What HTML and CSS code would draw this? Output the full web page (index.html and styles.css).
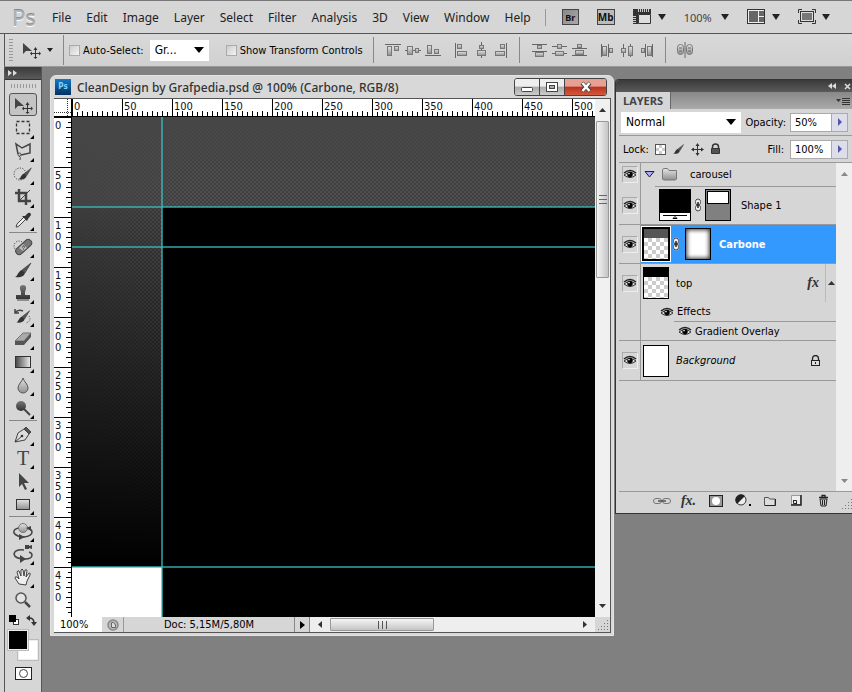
FILE: index.html
```html
<!DOCTYPE html>
<html lang="en">
<head>
    <meta charset="UTF-8">
    <meta name="viewport" content="width=device-width, initial-scale=1.0">
    <title>CleanDesign by Grafpedia.psd</title>
    <link rel="stylesheet" href="styles.css">
</head>
<body>
    <!-- shared gradients and symbols -->
    <svg class="defs" width="0" height="0" aria-hidden="true">
        <defs>
            <linearGradient id="metal" x1="0" y1="0" x2="0" y2="1"><stop offset="0" stop-color="#e4e4e4"/><stop offset="1" stop-color="#909090"/></linearGradient>
            <linearGradient id="dark" x1="0" y1="0" x2="0" y2="1"><stop offset="0" stop-color="#777"/><stop offset="1" stop-color="#333"/></linearGradient>
            <linearGradient id="fade" x1="0" y1="0" x2="1" y2="0"><stop offset="0" stop-color="#444"/><stop offset="1" stop-color="#eee"/></linearGradient>
            <symbol id="eye" viewBox="0 0 14 10">
                <path d="M1 4Q7-1 13 4" fill="none" stroke="#222" stroke-width="1.6"/>
                <path d="M1 6Q7 1 13 6Q7 11 1 6z" fill="#ddd" stroke="#333"/>
                <circle cx="7" cy="5.5" r="2.7" fill="#000"/><circle cx="6" cy="4.6" r=".8" fill="#fff"/>
            </symbol>
            <symbol id="chain" viewBox="0 0 8 14">
                <rect x="1" y=".5" width="6" height="7" rx="3" fill="#eee"/>
                <rect x="1" y="6.5" width="6" height="7" rx="3" fill="#eee"/>
                <rect x="1.500" y="1" width="5" height="6" rx="2.500" fill="none" stroke="#444"/>
                <rect x="1.500" y="7" width="5" height="6" rx="2.500" fill="none" stroke="#444"/>
                <path d="M4 4v6" stroke="#222" stroke-width="1.500"/>
            </symbol>
            <symbol id="move" viewBox="0 0 20 18">
                <path d="M2 2v11l3-3 6 0z" fill="#444"/>
                <path d="M14.500 8v9M10 12.500h9" stroke="#333" stroke-width="1"/>
                <path d="M14.500 6l2 3h-4zM14.500 18l2-2h-4zM9 12.500l2-2v4zM20 12.500l-2-2v4z" fill="#333"/>
            </symbol>
            <symbol id="brush" viewBox="0 0 20 18">
                <path d="M18 2L9 9l3 3z" fill="#555" stroke="#333" stroke-width=".6"/>
                <path d="M9 9l3 3c-1 4-6 5-10 4 3-1 3-6 7-7z" fill="#333"/>
            </symbol>
            <symbol id="dots" viewBox="0 0 10 10">
                <path d="M9 0h1v1h-1zM6 3h1v1H6zM9 3h1v1h-1zM3 6h1v1H3zM6 6h1v1H6zM9 6h1v1h-1zM0 9h1v1H0zM3 9h1v1H3zM6 9h1v1H6zM9 9h1v1h-1z" fill="#777"/>
            </symbol>
        </defs>
    </svg>

    <header class="menu-bar">
        <span class="logo">Ps</span>
        <nav class="menu">
            <button>File</button>
            <button>Edit</button>
            <button>Image</button>
            <button>Layer</button>
            <button>Select</button>
            <button>Filter</button>
            <button>Analysis</button>
            <button>3D</button>
            <button>View</button>
            <button>Window</button>
            <button>Help</button>
        </nav>
        <div class="app-tools">
            <button class="bridge">Br</button>
            <button class="mini-bridge">Mb</button>
            <button class="drop" aria-label="View extras"><svg width="19" height="16"><path d="M5.500 5.500h12v9h-12z" fill="#ddd" stroke="#333"/><path d="M0 0h18v5H5v10H0z" fill="#333"/><path d="M0 7.500h3M0 9.500h3M0 11.500h3M0 13.500h3M5.500 0v3M7.500 0v3M9.500 0v3M11.500 0v3M13.500 0v3M15.500 0v3" stroke="#ccc"/></svg><i class="caret"></i></button>
            <button class="drop zoom-level"><span>100%</span><i class="caret"></i></button>
            <button class="drop" aria-label="Arrange documents"><svg width="19" height="16"><rect x=".5" y=".5" width="17" height="14" fill="#eee" stroke="#333"/><path d="M2 2h9v11H2zM12 2h5v5h-5zM12 8h5v5h-5z" fill="#666"/></svg><i class="caret"></i></button>
            <button class="drop" aria-label="Screen mode"><svg width="18" height="16"><path d="M.5 4V.5H4M14 .5h3.500V4M17.500 11v3.500H14M4 14.500H.5V11" fill="none" stroke="#333"/><rect x="2.500" y="2.500" width="13" height="10" fill="#ddd" stroke="#333"/><rect x="4" y="4" width="10" height="7" fill="#777"/></svg><i class="caret"></i></button>
        </div>
    </header>

    <section class="options-bar">
        <span class="grip"></span>
        <button class="drop preset" aria-label="Move tool presets"><svg width="20" height="18"><use href="#move"/></svg><i class="caret"></i></button>
        <div class="auto-select">
            <input type="checkbox" id="auto"><label for="auto">Auto-Select:</label>
            <span class="select-wrap group-select"><select aria-label="Auto-select target"><option>Gr...</option><option>Layer</option></select></span>
            <input type="checkbox" id="transform"><label for="transform">Show Transform Controls</label>
        </div>
        <div class="align">
            <div class="icon-group">
                <button aria-label="Align top edges"><svg width="16" height="16"><path d="M0 2.500h16" class="l"/><rect x="2.500" y="4.500" width="4" height="9" class="b"/><rect x="9.500" y="4.500" width="4" height="4" class="b"/></svg></button>
                <button aria-label="Align vertical centers"><svg width="16" height="16"><path d="M0 8.500h16" class="l"/><rect x="2.500" y="4.500" width="5" height="8" class="b"/><rect x="10.500" y="6.500" width="3" height="4" class="b"/></svg></button>
                <button aria-label="Align bottom edges"><svg width="16" height="16"><path d="M0 13.500h16" class="l"/><rect x="2.500" y="3.500" width="4" height="8" class="b"/><rect x="9.500" y="7.500" width="4" height="4" class="b"/></svg></button>
            </div>
            <div class="icon-group">
                <button aria-label="Align left edges"><svg width="16" height="16"><path d="M2.500 1v15" class="l"/><rect x="4.500" y="2.500" width="4" height="4" class="b"/><rect x="4.500" y="9.500" width="9" height="4" class="b"/></svg></button>
                <button aria-label="Align horizontal centers"><svg width="16" height="16"><path d="M8.500 0v16" class="l"/><rect x="6.500" y="3.500" width="4" height="3" class="b"/><rect x="4.500" y="8.500" width="8" height="5" class="b"/></svg></button>
                <button aria-label="Align right edges"><svg width="16" height="16"><path d="M13.500 1v15" class="l"/><rect x="7.500" y="2.500" width="4" height="4" class="b"/><rect x="2.500" y="9.500" width="9" height="4" class="b"/></svg></button>
            </div>
        </div>
        <div class="align">
            <div class="icon-group">
                <button aria-label="Distribute top edges"><svg width="16" height="16"><path d="M1 2.500h15M1 9.500h15" class="l"/><rect x="6.500" y="3.500" width="4" height="3" class="b"/><rect x="4.500" y="10.500" width="8" height="4" class="b"/></svg></button>
                <button aria-label="Distribute vertical centers"><svg width="16" height="16"><path d="M1 4.500h15M1 11.500h15" class="l"/><rect x="6.500" y="2.500" width="4" height="4" class="b"/><rect x="4.500" y="9.500" width="8" height="4" class="b"/></svg></button>
                <button aria-label="Distribute bottom edges"><svg width="16" height="16"><path d="M1 6.500h15M1 13.500h15" class="l"/><rect x="6.500" y="2.500" width="4" height="3" class="b"/><rect x="4.500" y="8.500" width="8" height="4" class="b"/></svg></button>
            </div>
            <div class="icon-group">
                <button aria-label="Distribute left edges"><svg width="16" height="16"><path d="M2.500 2v13M9.500 2v13" class="l"/><rect x="3.500" y="4.500" width="4" height="9" class="b"/><rect x="10.500" y="6.500" width="3" height="4" class="b"/></svg></button>
                <button aria-label="Distribute horizontal centers"><svg width="16" height="16"><path d="M4.500 2v13M11.500 2v13" class="l"/><rect x="2.500" y="6.500" width="4" height="4" class="b"/><rect x="9.500" y="4.500" width="4" height="9" class="b"/></svg></button>
                <button aria-label="Distribute right edges"><svg width="16" height="16"><path d="M6.500 2v13M13.500 2v13" class="l"/><rect x="2.500" y="6.500" width="3" height="4" class="b"/><rect x="8.500" y="4.500" width="4" height="9" class="b"/></svg></button>
            </div>
        </div>
        <div class="align">
            <button aria-label="Auto-align layers"><svg width="18" height="16"><rect x="1.500" y="2.500" width="6" height="10" rx="3" class="b"/><rect x="10.500" y="2.500" width="6" height="10" rx="3" class="b"/><path d="M9 0v16M3 6h3M3 9h3M12 6h3M12 9h3" class="l"/></svg></button>
        </div>
    </section>

    <main class="workspace">
        <aside class="toolbox">
            <button class="toolbox-head" aria-label="Expand tools"><svg width="9" height="6"><path d="M0 0l4 3-4 3zM5 0l4 3-4 3z" fill="#ddd"/></svg></button>
            <span class="toolbox-grip"></span>
            <div class="tools">
                <button class="active" aria-label="Move"><svg width="20" height="18"><use href="#move"/></svg></button>
                <button class="more" aria-label="Marquee"><svg width="20" height="18"><rect x="3.500" y="2.500" width="13" height="12" fill="none" stroke="#333" stroke-width="1.3" stroke-dasharray="3 2"/></svg></button>
                <button class="more" aria-label="Lasso"><svg width="20" height="18"><path d="M5 12L3 2l6 4 8-4v9l-9 2" fill="none" stroke="#444" stroke-width="1.500"/><circle cx="6.500" cy="12.500" r="1.500" fill="none" stroke="#444"/><path d="M6 14q2 1 1 4" fill="none" stroke="#444"/></svg></button>
                <button class="more" aria-label="Quick selection"><svg width="20" height="18"><circle cx="7" cy="9" r="6" fill="none" stroke="#333" stroke-dasharray="1 1.500"/><use href="#brush" x="4" y="1" width="16" height="15"/></svg></button>
                <button class="more" aria-label="Crop"><svg width="20" height="18"><path d="M6 1v12h12M2 5h11v12" fill="none" stroke="#444" stroke-width="2.500"/><path d="M6 13L17 2" stroke="#444"/></svg></button>
                <button class="more" aria-label="Eyedropper"><svg width="20" height="18"><path d="M4 16l-1 0 1-3 7-7 2 2-7 7z" fill="#eee" stroke="#444"/><path d="M9 5l5 5 1-2 3-4q0-3-3-2l-3 3z" fill="#333"/></svg></button>
                <hr>
                <button class="more" aria-label="Healing brush"><svg width="20" height="18"><circle cx="6" cy="8" r="5" fill="none" stroke="#333" stroke-dasharray="1 1.500"/><rect x="1" y="6" width="19" height="7" rx="3.500" transform="rotate(-42 10 9)" fill="#777" stroke="#444"/><path d="M10 6l4 4-4 3-4-3z" fill="#bbb"/><path d="M9 9h1M11 9h1M10 11h1M10 8h1" stroke="#333"/></svg></button>
                <button class="more" aria-label="Brush"><svg width="20" height="18"><use href="#brush"/></svg></button>
                <button class="more" aria-label="Clone stamp"><svg width="20" height="18"><path d="M8 8Q5 1 10 1t2 7v3h5v4H3v-4h5z" fill="url(#dark)"/><path d="M4 16h12" stroke="#444"/></svg></button>
                <button class="more" aria-label="History brush"><svg width="20" height="18"><use href="#brush" x="1" y="2" width="18" height="15"/><path d="M2 6q3-4 8-2M2 2v4h4" fill="none" stroke="#444" stroke-width="1.500"/><path d="M16 9q3 5-3 7" fill="none" stroke="#444" stroke-dasharray="1 1.500"/></svg></button>
                <button class="more" aria-label="Eraser"><svg width="20" height="18"><path d="M2 11L10 3h8l-7 8z" fill="#aaa" stroke="#777"/><path d="M2 11h9l7-8v4l-7 8H2z" fill="#555"/></svg></button>
                <button class="more" aria-label="Gradient"><svg width="20" height="18"><rect x="2.500" y="3.500" width="15" height="11" fill="url(#fade)" stroke="#333"/></svg></button>
                <button class="more" aria-label="Blur"><svg width="20" height="18"><path d="M10 2c1 4 5 6 5 10a5 5 0 0 1-10 0c0-4 4-6 5-10z" fill="url(#metal)" stroke="#555"/></svg></button>
                <button class="more" aria-label="Dodge"><svg width="20" height="18"><path d="M10 9l7 7" stroke="#444" stroke-width="2"/><circle cx="8" cy="7" r="5" fill="url(#dark)"/></svg></button>
                <hr>
                <button class="more" aria-label="Pen"><svg width="20" height="18"><path d="M2 16l3-9 6-4 5 5-4 6z" fill="#ddd" stroke="#444"/><path d="M11 3l2-2 5 5-2 2zM2 16l7-6" fill="#555" stroke="#444"/><circle cx="9" cy="10" r="1.300" fill="#333"/></svg></button>
                <button class="more type" aria-label="Type">T</button>
                <button class="more" aria-label="Path selection"><svg width="20" height="18"><path d="M6 1v14l3-3 3 6 2-1-3-6h5z" fill="#444"/></svg></button>
                <button class="more" aria-label="Rectangle"><svg width="20" height="18"><rect x="3.500" y="4.500" width="13" height="10" fill="url(#metal)" stroke="#333"/></svg></button>
                <hr>
                <button class="more" aria-label="3D rotate"><svg width="20" height="18"><path d="M6 6Q0 7 1 11q3 4 10 4 8-1 8-5 0-3-5-4" fill="none" stroke="#444" stroke-width="1.500"/><circle cx="10" cy="6" r="4.500" fill="url(#metal)" stroke="#777"/><path d="M6 12l6 3-6 3zM13 6l5-2v5z" fill="#444"/></svg></button>
                <button class="more" aria-label="3D orbit"><svg width="20" height="18"><path d="M11 5Q2 4 1 9q1 5 11 5 7 0 7-4 0-2-3-3" fill="none" stroke="#444" stroke-width="1.500"/><path d="M12 0h4v1l3-1v4l-3-1v1h-4zM7 10l6 4-6 4z" fill="#444"/></svg></button>
                <button class="more" aria-label="Hand"><svg width="20" height="18"><path d="M6 16L2 10q0-2 2-1l2 2-2-7q1-2 2-1l2 5V2q1-2 2 0l1 6 1-6q2-1 2 1l-1 6 3-4q2 0 1 2l-3 6-1 4z" fill="#eee" stroke="#444"/></svg></button>
                <button aria-label="Zoom"><svg width="20" height="18"><circle cx="8" cy="7" r="5" fill="#e4e4e4" stroke="#555" stroke-width="1.500"/><path d="M12 11l5 5" stroke="#444" stroke-width="2.500"/></svg></button>
            </div>
            <div class="color-reset">
                <button aria-label="Default colors"><svg width="11" height="11"><rect x="4.500" y="4.500" width="5" height="5" fill="#fff" stroke="#333"/><rect width="7" height="7" fill="#000"/></svg></button>
                <button aria-label="Swap colors"><svg width="11" height="11"><path d="M3 3q5 0 5 5" fill="none" stroke="#333" stroke-width="1.500"/><path d="M0 3l4-3v6zM8 11L5 7h6z" fill="#333"/></svg></button>
            </div>
            <div class="swatches">
                <button class="back-color" aria-label="Background color"></button>
                <button class="fore-color" aria-label="Foreground color"></button>
            </div>
            <button class="quick-mask" aria-label="Quick mask"><svg width="17" height="13"><rect x=".5" y=".5" width="16" height="12" fill="#fff" stroke="#222"/><circle cx="8.500" cy="6.500" r="4" fill="#fff" stroke="#444"/></svg></button>
        </aside>

        <section class="document">
            <div class="title-bar">
                <span class="doc-icon">Ps</span>
                <h1>CleanDesign by Grafpedia.psd @ 100% (Carbone, RGB/8)</h1>
                <div class="window-buttons">
                    <button aria-label="Minimize"><svg width="14" height="12"><rect x="1.500" y="6.500" width="11" height="4" rx="1" fill="#fff" stroke="#444"/></svg></button>
                    <button aria-label="Maximize"><svg width="14" height="12"><rect x="1.500" y="1.500" width="11" height="9" fill="#fff" stroke="#444"/><rect x="4.500" y="4.500" width="5" height="3" fill="#aaa" stroke="#444"/></svg></button>
                    <button class="close" aria-label="Close"><svg width="14" height="12"><path d="M3 2l8 8M11 2l-8 8" stroke="#444" stroke-width="4"/><path d="M3.500 2l7 8M10.500 2l-7 8" stroke="#fff" stroke-width="2.500"/></svg></button>
                </div>
            </div>
            <div class="doc-body">
                <div class="ruler-corner"></div>
                <div class="ruler ruler-x">
                    <span>0</span><span>50</span><span>100</span><span>150</span><span>200</span><span>250</span><span>300</span><span>350</span><span>400</span><span>450</span><span>500</span>
                </div>
                <div class="ruler ruler-y">
                    <span>0</span><span>50</span><span>100</span><span>150</span><span>200</span><span>250</span><span>300</span><span>350</span><span>400</span><span>450</span>
                </div>
                <div class="canvas">
                    <div class="carbon"></div>
                    <div class="content-block"></div>
                    <div class="page-block"></div>
                    <i class="guide guide-x1"></i>
                    <i class="guide guide-x2"></i>
                    <i class="guide guide-x3"></i>
                    <i class="guide guide-y"></i>
                </div>
                <div class="scroll-y">
                    <button aria-label="Scroll up"><svg width="7" height="4"><path d="M0 4l3.500-4L7 4z" fill="#333"/></svg></button>
                    <span class="thumb"></span>
                    <button class="end" aria-label="Scroll down"><svg width="7" height="4"><path d="M0 0h7L3.500 4z" fill="#333"/></svg></button>
                </div>
                <div class="status-bar">
                    <input class="zoom-input" type="text" value="100%" aria-label="Zoom">
                    <button class="status-icon" aria-label="Version cue"><svg width="12" height="12"><circle cx="6" cy="6" r="5" fill="#bbb" stroke="#888" stroke-width="1.500"/><path d="M4.500 3.500v5h4V6L6.500 3.500z" fill="#ddd" stroke="#666"/></svg></button>
                    <span class="doc-size">Doc: 5,15M/5,80M</span>
                    <button class="status-menu" aria-label="Status options"><svg width="5" height="8"><path d="M0 0l5 4-5 4z"/></svg></button>
                    <div class="scroll-x">
                        <button aria-label="Scroll left"><svg width="4" height="7"><path d="M4 0v7L0 3.500z" fill="#333"/></svg></button>
                        <span class="thumb"></span>
                        <button class="end" aria-label="Scroll right"><svg width="4" height="7"><path d="M0 0v7l4-3.500z" fill="#333"/></svg></button>
                    </div>
                </div>
                <div class="resize"><svg width="10" height="10"><use href="#dots"/></svg></div>
            </div>
        </section>

        <aside class="panel">
            <div class="panel-top">
                <button aria-label="Collapse"><svg width="8" height="6"><path d="M4 0v6L0 3zM8 0v6L4 3z" fill="#ddd"/></svg></button>
                <button aria-label="Close panel"><svg width="7" height="7"><path d="M1 1l5 5M6 1L1 6" stroke="#ddd" stroke-width="1.500"/></svg></button>
            </div>
            <div class="tabs">
                <button class="tab">LAYERS</button>
                <button class="panel-menu" aria-label="Panel menu"><svg width="14" height="8"><path d="M0 2h5L2.500 5zM6 1h8v1H6zM6 3h8v1H6zM6 5h8v1H6zM6 7h8v1H6z" fill="#333"/></svg></button>
            </div>
            <div class="panel-row blend-row">
                <span class="select-wrap blend"><select aria-label="Blend mode"><option>Normal</option><option>Multiply</option></select></span>
                <label for="opacity">Opacity:</label>
                <span class="value"><input type="text" id="opacity" value="50%"><button aria-label="Opacity slider"></button></span>
            </div>
            <div class="panel-row lock-row">
                <span>Lock:</span>
                <button class="lock-pixels" aria-label="Lock transparent pixels"></button>
                <button aria-label="Lock image pixels"><svg width="13" height="12"><use href="#brush" width="13" height="12"/></svg></button>
                <button aria-label="Lock position"><svg width="13" height="13"><path d="M6.500 2v9M2 6.500h9" stroke="#333"/><path d="M6.500 0l2 3h-4zM6.500 13l2-3h-4zM0 6.500l3-2v4zM13 6.500l-3-2v4z" fill="#333"/></svg></button>
                <button aria-label="Lock all"><svg width="11" height="12"><path d="M2.500 6V4a3 3 0 0 1 6 0v2" fill="none" stroke="#333" stroke-width="1.500"/><rect x="1" y="5" width="9" height="6" rx="1" fill="#333"/><path d="M2 7h7M2 9h7" stroke="#777"/></svg></button>
                <label for="fill">Fill:</label>
                <span class="value"><input type="text" id="fill" value="100%"><button aria-label="Fill slider"></button></span>
            </div>
            <div class="layers-wrap">
                <ul class="layers">
                    <li class="layer group">
                        <button class="eye" aria-label="Toggle carousel"><svg width="14" height="10"><use href="#eye"/></svg></button>
                        <div class="info">
                            <svg width="11" height="7"><path d="M1 .5h9l-4.500 5.500z" fill="#aaf" stroke="#222"/></svg>
                            <svg class="folder" width="16" height="13"><path d="M.5 11V2l1-1.500h4L7 2.500h7.500V11l-1 1h-12z" fill="url(#metal)" stroke="#777"/></svg>
                            <span>carousel</span>
                        </div>
                    </li>
                    <li class="layer child">
                        <button class="eye" aria-label="Toggle Shape 1"><svg width="14" height="10"><use href="#eye"/></svg></button>
                        <div class="info">
                            <span class="thumb-fill"><svg width="30" height="7"><path d="M3 2.500h24M13 5.500l2-2 2 2z" fill="none" stroke="#000"/></svg></span>
                            <svg width="8" height="14"><use href="#chain"/></svg>
                            <span class="thumb-mask"></span>
                            <span class="name">Shape 1</span>
                        </div>
                    </li>
                    <li class="layer selected">
                        <button class="eye" aria-label="Toggle Carbone"><svg width="14" height="10"><use href="#eye"/></svg></button>
                        <div class="info">
                            <span class="frame"><span class="thumb-layer grey"></span></span>
                            <svg width="8" height="14"><use href="#chain"/></svg>
                            <span class="thumb-soft"></span>
                            <span class="name">Carbone</span>
                        </div>
                    </li>
                    <li class="layer with-effects">
                        <button class="eye" aria-label="Toggle top"><svg width="14" height="10"><use href="#eye"/></svg></button>
                        <div class="info">
                            <div class="line">
                                <span class="thumb-layer"></span>
                                <span class="name">top</span>
                                <span class="fx">fx</span>
                                <button class="fold" aria-label="Fold effects"><svg width="7" height="4"><path d="M0 4l3.500-4L7 4z" fill="#333"/></svg></button>
                            </div>
                            <div class="effect"><svg width="14" height="10"><use href="#eye"/></svg>Effects</div>
                            <div class="effect nested"><svg width="14" height="10"><use href="#eye"/></svg>Gradient Overlay</div>
                        </div>
                    </li>
                    <li class="layer background">
                        <button class="eye" aria-label="Toggle Background"><svg width="14" height="10"><use href="#eye"/></svg></button>
                        <div class="info">
                            <span class="thumb-white"></span>
                            <em class="name">Background</em>
                            <svg class="locked" width="11" height="12"><path d="M2.500 5V3.500a3 3 0 0 1 6 0V5" fill="none" stroke="#222" stroke-width="1.300"/><rect x="1.500" y="5.500" width="8" height="5" fill="#ddd" stroke="#222"/><path d="M5.500 7v2" stroke="#222"/></svg>
                        </div>
                    </li>
                </ul>
                <div class="layer-scroll">
                    <svg width="7" height="4"><path d="M0 4l3.500-4L7 4z" fill="#888"/></svg>
                    <svg width="7" height="4"><path d="M0 0h7L3.500 4z" fill="#888"/></svg>
                </div>
            </div>
            <div class="panel-foot">
                <button aria-label="Link layers"><svg width="18" height="8"><rect x=".5" y="1.500" width="8" height="5" rx="2.500" fill="none" stroke="#777"/><rect x="9.500" y="1.500" width="8" height="5" rx="2.500" fill="none" stroke="#777"/><path d="M5 4h8" stroke="#555" stroke-width="1.500"/></svg></button>
                <button class="fx" aria-label="Layer style">fx.</button>
                <button aria-label="Add mask"><svg width="14" height="12"><rect x=".5" y=".5" width="13" height="11" fill="#999" stroke="#222"/><circle cx="7" cy="6" r="4" fill="#fff"/></svg></button>
                <button aria-label="Adjustment layer"><svg width="16" height="13"><circle cx="6" cy="6" r="5" fill="#eee" stroke="#333"/><path d="M2 10A5 5 0 0 1 10 2z" fill="#222"/><path d="M14 10h2v2h-2z"/></svg></button>
                <button aria-label="New group"><svg width="12" height="10"><path d="M.5 9.500V1.500h4l1 1.500h5.500v6.500z" fill="#ddd" stroke="#555"/><path d="M1 9.500h10.500V3" fill="none" stroke="#222"/></svg></button>
                <button aria-label="New layer"><svg width="11" height="11"><path d="M.5 .5h9v9h-9z" fill="#eee" stroke="#999"/><path d="M0 10h10V0" fill="none" stroke="#222" stroke-width="1.500"/><path d="M2 5.500h3.500V9M2.500 5.500v3H6" fill="none" stroke="#222"/></svg></button>
                <button aria-label="Delete layer"><svg width="11" height="13"><path d="M1 3.500h9M4 3V1.500h3V3" fill="none" stroke="#222" stroke-width="1.300"/><path d="M2 5h7l-1 7H3z" fill="#ccc" stroke="#222"/><path d="M4.500 6v5M6.500 6v5" stroke="#222"/></svg></button>
                <svg class="dots" width="10" height="10"><use href="#dots"/></svg>
            </div>
        </aside>
    </main>
</body>
</html>
```
FILE: styles.css
```css
* {
    box-sizing: border-box;
}

body {
    display: flex;
    flex-direction: column;
    min-height: 100vh;
    margin: 0;
    background-color: #808080;
    color: #000;
    font-family: "DejaVu Sans Condensed", "DejaVu Sans", sans-serif;
    font-size: 11px;
}

button {
    display: flex;
    align-items: center;
    justify-content: center;
    padding: 0;
    border: none;
    background: none;
    color: inherit;
    font: inherit;
}

input, select {
    margin: 0;
    border: none;
    border-radius: 0;
    font: inherit;
    color: #000;
}

svg {
    display: block;
    flex: none;
}

.defs {
    position: absolute;
}

.caret {
    border: 4px solid transparent;
    border-top: 6px solid #222;
    border-bottom: none;
}

.drop {
    gap: 6px;
}

/* menu bar */
.menu-bar {
    display: flex;
    align-items: center;
    height: 34px;
    padding-left: 12px;
    border-top: 1px solid #777;
    border-bottom: 1px solid #555;
    background-color: #d6d6d6;
    color: #222;
    font-family: "Noto Sans", sans-serif;
    font-size: 12px;
    white-space: nowrap;
}

.logo {
    width: 40px;
    color: #b2b2b2;
    font-size: 22px;
    line-height: 28px;
    text-shadow: 0 -1px 0 #888, 0 1px 0 #fff;
}

.menu {
    display: flex;
    gap: 15px;
    padding-right: 14px;
    border-right: 1px solid #999;
}

.app-tools {
    display: flex;
    align-items: center;
    gap: 18px;
    margin-left: 16px;
}

.bridge, .mini-bridge {
    width: 17px;
    height: 16px;
    border: 1px solid #444;
    background: linear-gradient(135deg, #888, #aaa);
    color: #111;
    font-size: 9px;
    font-weight: bold;
}

.mini-bridge {
    width: 18px;
    background: #bbb;
    font-size: 10px;
}

.zoom-level {
    gap: 9px;
    color: #444;
    font-size: 11px;
}

/* options bar */
.options-bar {
    display: flex;
    align-items: center;
    height: 33px;
    margin-left: 4px;
    border-left: 1px solid #555;
    border-bottom: 1px solid #999;
    background: linear-gradient(#d9d9d9, #d0d0d0);
    box-shadow: -4px 0 #d6d6d6;
    white-space: nowrap;
}

.grip {
    width: 4px;
    height: 24px;
    margin: 0 8px 0 4px;
    background: radial-gradient(circle, #999 1px, transparent 1px) 0 0 / 2px 3px;
}

.preset .caret {
    border-width: 4px 3px 0;
}

.preset {
    padding-right: 10px;
}

.auto-select {
    display: flex;
    align-items: center;
    height: 30px;
    padding: 0 10px 0 5px;
    border-left: 1px solid #888;
}

.auto-select input {
    appearance: none;
    width: 11px;
    height: 11px;
    margin-right: 3px;
    border: 1px solid #aaa;
    background: linear-gradient(135deg, #ccc, #f4f4f4);
}

.select-wrap {
    position: relative;
    display: block;
}

.select-wrap::after {
    content: "";
    position: absolute;
    right: 5px;
    top: 50%;
    margin-top: -3px;
    border: 5px solid transparent;
    border-top: 6px solid #000;
    border-bottom: none;
    pointer-events: none;
}

.select-wrap select {
    appearance: none;
    width: 100%;
    height: 21px;
    padding: 0 5px;
    background: #fff;
    font-size: 12px;
}

.group-select {
    width: 59px;
    margin: 0 17px 0 6px;
}

.align {
    display: flex;
    align-items: center;
    gap: 8px;
    height: 26px;
    padding: 0 8px 0 9px;
    border-left: 1px solid #888;
}

.icon-group {
    display: flex;
}

.align button {
    width: 20px;
    height: 20px;
}

.align .l {
    fill: none;
    stroke: #666;
}

.align .b {
    fill: url(#metal);
    stroke: #777;
}

.workspace {
    display: flex;
    flex: 1;
    align-items: flex-start;
    padding-left: 4px;
    background: linear-gradient(to right, #d6d6d6 4px, #808080 4px);
}

/* tools */
.toolbox {
    display: flex;
    flex-direction: column;
    align-items: center;
    align-self: stretch;
    width: 38px;
    border: 1px solid #555;
    border-width: 0 1px;
    background-color: #d6d6d6;
}

.toolbox-head {
    justify-content: flex-start;
    width: 100%;
    height: 13px;
    padding-left: 3px;
    border-bottom: 1px solid #333;
    background: linear-gradient(#3a3a3a, #5a5a5a);
}

.toolbox-grip {
    width: 27px;
    height: 4px;
    margin: 4px 0 5px;
    background: radial-gradient(circle, #999 1px, transparent 1px) 0 0 / 3px 2px;
}

.tools button {
    position: relative;
    width: 28px;
    height: 23px;
}

.tools hr {
    height: 1px;
    margin: 1px 0 2px;
    border: none;
    background-color: #888;
}

.tools .active {
    border: 1px solid #555;
    border-radius: 3px;
    background-color: #c4c4c4;
}

.tools .more::after {
    content: "";
    position: absolute;
    right: 3px;
    bottom: 0;
    border: 2px solid;
    border-color: transparent #000 #000 transparent;
}

.tools .type {
    color: #444;
    font: 20px/20px "Liberation Serif", serif;
}

.color-reset {
    display: flex;
    justify-content: space-between;
    width: 28px;
    margin: 4px 0;
}

.swatches {
    position: relative;
    width: 30px;
    height: 30px;
}

.fore-color, .back-color {
    position: absolute;
    top: 0;
    left: 0;
    width: 20px;
    height: 20px;
    border: 1px solid #eee;
    background-color: #000;
    outline: 1px solid #bbb;
}

.back-color {
    top: auto;
    left: auto;
    right: 0;
    bottom: 0;
    background-color: #fff;
}

.quick-mask {
    margin-top: 7px;
}

/* document window */
.document {
    display: flex;
    flex: 1;
    flex-direction: column;
    align-self: stretch;
    min-width: 300px;
    margin: 8px 1px 56px 8px;
    padding: 0 2px 2px 3px;
    border: 1px solid #e4e4e4;
    border-radius: 6px 6px 0 0;
    background-color: #d8d8d8;
}

.title-bar {
    display: flex;
    align-items: center;
    height: 22px;
    padding-left: 1px;
    white-space: nowrap;
}

.doc-icon {
    width: 16px;
    height: 16px;
    margin-right: 6px;
    background: linear-gradient(#1677c5, #03315f);
    color: #7fd6ff;
    font-size: 8px;
    font-weight: bold;
    line-height: 15px;
    text-align: center;
}

.title-bar h1 {
    flex: 1;
    margin: 0;
    color: #333;
    font-family: "Noto Sans", sans-serif;
    font-size: 12px;
    font-weight: 500;
}

.window-buttons {
    display: flex;
    height: 18px;
    margin-right: 4px;
    border: 1px solid #444;
    border-radius: 3px;
    overflow: hidden;
}

.window-buttons button {
    width: 25px;
    border-right: 1px solid #444;
    background: linear-gradient(#eee 45%, #aaa 50%, #ccc);
}

.window-buttons .close {
    width: 41px;
    border: none;
    background: linear-gradient(#e6a194 45%, #bd301c 50%, #d0593f);
}

.doc-body {
    display: grid;
    flex: 1;
    grid-template-columns: 18px 1fr 15px;
    grid-template-rows: 18px 1fr 15px;
    border: 1px solid #555;
    border-left: none;
    background-color: #fff;
}

.ruler-corner {
    border-right: 1px solid #000;
    border-bottom: 1px solid #000;
    background:
        repeating-linear-gradient(to right, #333 0 1px, transparent 1px 2px) 0 13px / 100% 1px no-repeat,
        repeating-linear-gradient(#333 0 1px, transparent 1px 2px) 13px 0 / 1px 100% no-repeat;
}

.ruler {
    display: flex;
    overflow: hidden;
    color: #112;
}

.ruler-x {
    border-bottom: 1px solid #000;
    background:
        repeating-linear-gradient(to right, #000 0 1px, transparent 1px 10px) 0 100% / 100% 5px no-repeat,
        repeating-linear-gradient(to right, #000 0 1px, transparent 1px 5px) 0 100% / 100% 4px no-repeat;
}

.ruler-x span {
    flex: none;
    width: 50px;
    padding-left: 1px;
    border-left: 1px solid #000;
    line-height: 15px;
}

.ruler-x span:last-child {
    flex: 1;
    width: auto;
}

.ruler-y {
    flex-direction: column;
    border-right: 1px solid #000;
    background:
        repeating-linear-gradient(#000 0 1px, transparent 1px 10px) 100% 0 / 5px 100% no-repeat,
        repeating-linear-gradient(#000 0 1px, transparent 1px 5px) 100% 0 / 3px 100% no-repeat;
}

.ruler-y span {
    flex: none;
    height: 50px;
    padding: 2px 8px 0 1px;
    border-top: 1px solid #000;
    line-height: 11px;
    word-break: break-all;
}

.canvas {
    position: relative;
    display: grid;
    grid-template-columns: 90px 1fr;
    grid-template-rows: 90px 360px 1fr;
    overflow: hidden;
    background-color: #000;
}

.carbon {
    grid-area: 1 / 1 / 3 / 3;
    background:
        linear-gradient(transparent 90px, rgba(0, 0, 0, 0.1) 90px, #000 100%),
        linear-gradient(#464646, rgba(70, 70, 70, 0) 120px),
        linear-gradient(to right, #424242, rgba(66, 66, 66, 0) 120px),
        conic-gradient(#555 25%, #3a3a3a 0 50%, #555 0 75%, #3a3a3a 0) 0 0 / 4px 4px;
}

.content-block {
    grid-area: 2 / 2 / 4 / 3;
    background-color: #000;
}

.page-block {
    grid-area: 3 / 1;
    background-color: #fff;
}

.guide {
    position: absolute;
    left: 0;
    right: 0;
    height: 2px;
    background-color: rgba(58, 190, 190, 0.66);
}

.guide-x1 {
    top: 89px;
}

.guide-x2 {
    top: 129px;
}

.guide-x3 {
    top: 449px;
}

.guide-y {
    top: 0;
    bottom: 0;
    left: 89px;
    width: 2px;
    height: auto;
}

.scroll-y {
    display: flex;
    grid-area: 1 / 3 / 3 / 4;
    flex-direction: column;
    align-items: center;
    padding: 0 1px;
    background-color: #f0f0f0;
}

.scroll-y button {
    width: 13px;
    height: 22px;
}

.scroll-y .end {
    margin-top: auto;
}

.scroll-y .thumb, .scroll-x .thumb {
    border: 1px solid #999;
    border-radius: 1px;
    background:
        repeating-linear-gradient(#666 0 1px, transparent 1px 4px) 50% 50% / 8px 9px no-repeat,
        linear-gradient(to right, #f4f4f4, #ddd 50%, #c4c4c8);
}

.scroll-y .thumb {
    width: 13px;
    height: 157px;
}

.status-bar {
    display: flex;
    grid-column: 1 / 3;
    min-width: 0;
    background-color: #d6d6d6;
}

.zoom-input {
    width: 48px;
    padding: 0 6px;
}

.status-icon {
    width: 22px;
    border-right: 1px solid #999;
}

.doc-size {
    width: 170px;
    line-height: 15px;
    text-align: center;
}

.status-menu {
    width: 16px;
    border: 1px solid #888;
    border-width: 0 1px;
}

.scroll-x {
    display: flex;
    flex: 1;
    align-items: center;
    background-color: #eee;
}

.scroll-x button {
    width: 20px;
    height: 15px;
}

.scroll-x .end {
    margin-left: auto;
}

.scroll-x .thumb {
    width: 104px;
    height: 13px;
    background:
        repeating-linear-gradient(to right, #555 0 1px, transparent 1px 4px) 50% 50% / 9px 8px no-repeat,
        linear-gradient(#f4f4f4, #ddd 50%, #c4c4c8);
}

.resize {
    display: flex;
    align-items: flex-end;
    justify-content: flex-end;
    padding: 2px;
    background-color: #d6d6d6;
}

/* layers panel */
.panel {
    width: 237px;
    margin-top: 12px;
    border: 1px solid #333;
    border-right: none;
    border-radius: 4px 0 0 0;
    overflow: hidden;
    background-color: #d6d6d6;
}

.panel-top {
    display: flex;
    justify-content: flex-end;
    gap: 8px;
    height: 12px;
    padding-right: 1px;
    background: linear-gradient(#3a3a3a, #5a5a5a);
}

.tabs {
    display: flex;
    justify-content: space-between;
    height: 17px;
    padding-right: 2px;
    background: linear-gradient(#888, #aaa);
}

.tab {
    width: 55px;
    border-right: 1px solid #666;
    background-color: #d6d6d6;
    color: #444;
    font-family: "Open Sans", sans-serif;
    font-weight: bold;
}

.panel-row {
    display: flex;
    align-items: center;
    height: 27px;
    margin-left: 3px;
    padding-right: 4px;
    border-bottom: 1px solid #999;
}

.blend-row {
    gap: 4px;
}

.blend {
    flex: 1;
    margin-left: 2px;
}

.value {
    display: flex;
    width: 58px;
    height: 19px;
    border: 1px solid #aaa;
    background-color: #fff;
}

.value input {
    flex: 1;
    width: 0;
    padding: 0 4px;
    background: none;
}

.value button {
    width: 16px;
    border-left: 1px solid #aaa;
    background-color: #dedeea;
}

.value button::after {
    content: "";
    border: 4px solid transparent;
    border-left: 4px solid #55a;
    border-right: none;
}

.lock-row {
    gap: 6px;
    padding-left: 4px;
}

.lock-row label {
    margin-left: auto;
}

.lock-pixels {
    width: 11px;
    height: 11px;
    border: 1px solid #555;
    background: conic-gradient(#ccc 25%, #fff 0 50%, #ccc 0 75%, #fff 0) 0 0 / 6px 6px;
}

.layers-wrap {
    display: flex;
    min-height: 329px;
    margin-left: 3px;
    border-bottom: 1px solid #999;
}

.layers {
    flex: 1;
    margin: 0;
    padding: 0;
    list-style: none;
}

.layer {
    display: flex;
    height: 39px;
    border-bottom: 1px solid #999;
}

.eye {
    flex: none;
    width: 21px;
    height: 38px;
}

.eye svg {
    box-sizing: content-box;
    padding: 2px 0 3px;
    border: 1px solid;
    border-color: #aaa #eee #eee #aaa;
}

.info {
    display: flex;
    flex: 1;
    align-items: center;
    min-width: 0;
    padding-left: 2px;
    border-left: 1px solid #999;
}

.group {
    height: 23px;
    border: none;
}

.group .eye {
    height: 22px;
}

.group .info {
    padding-left: 3px;
}

.folder {
    margin: 0 12px 0 7px;
}

.child .info {
    gap: 3px;
    padding-left: 18px;
    background: linear-gradient(#999, #999) 14px 0 / 100% 1px no-repeat;
}

.thumb-fill {
    display: flex;
    align-items: flex-end;
    width: 32px;
    height: 32px;
    border: 1px solid #000;
    background-color: #000;
}

.thumb-fill svg {
    background-color: #fff;
}

.thumb-mask, .thumb-layer, .thumb-soft, .thumb-white {
    width: 26px;
    height: 32px;
    border: 1px solid #000;
    background-color: #808080;
}

.thumb-mask::before {
    content: "";
    display: block;
    height: 11px;
    margin: 1px;
    border: 1px solid #000;
    background-color: #fff;
}

.name {
    margin-left: 7px;
}

.selected .info {
    gap: 1px;
    padding-left: 0;
    background-color: #3399ff;
    color: #fff;
    font-weight: bold;
}

.frame {
    padding: 1px;
    border: 1px solid #fff;
    outline: 1px solid #000;
    outline-offset: -2px;
}

.thumb-layer {
    display: block;
    background:
        linear-gradient(#000, #000) 0 0 / 100% 9px no-repeat,
        conic-gradient(#ccc 25%, #fff 0 50%, #ccc 0 75%, #fff 0) 0 1px / 8px 8px;
}

.thumb-layer.grey {
    background:
        linear-gradient(#555, #555) 0 0 / 100% 9px no-repeat,
        conic-gradient(#ccc 25%, #fff 0 50%, #ccc 0 75%, #fff 0) 0 1px / 8px 8px;
}

.thumb-soft {
    margin-left: 4px;
    background-color: #fff;
    box-shadow: inset 0 0 4px 1px #333;
}

.with-effects {
    height: 77px;
}

.with-effects .info {
    display: block;
}

.line {
    display: flex;
    align-items: center;
    height: 38px;
}

.fx {
    color: #333;
    font: italic bold 14px "Liberation Serif", serif;
}

.line .fx {
    margin-left: auto;
}

.fold {
    width: 11px;
    height: 38px;
    margin-left: 6px;
    border-left: 1px solid #bbb;
}

.effect {
    display: flex;
    align-items: center;
    gap: 3px;
    height: 19px;
    margin-left: 17px;
}

.effect.nested {
    margin-left: 31px;
    padding-left: 4px;
    border-top: 1px solid #999;
}

.background {
    height: 40px;
}

.thumb-white {
    background-color: #fff;
}

.locked {
    margin: 0 15px 0 auto;
}

.layer-scroll {
    display: flex;
    flex-direction: column;
    align-items: center;
    justify-content: space-between;
    width: 16px;
    padding: 9px 0 8px;
    background-color: #eee;
}

.panel-foot {
    display: flex;
    align-items: center;
    justify-content: flex-end;
    height: 21px;
    padding-bottom: 4px;
}

.panel-foot button {
    width: 27px;
}

.dots {
    align-self: flex-end;
    margin-left: 5px;
}
```
